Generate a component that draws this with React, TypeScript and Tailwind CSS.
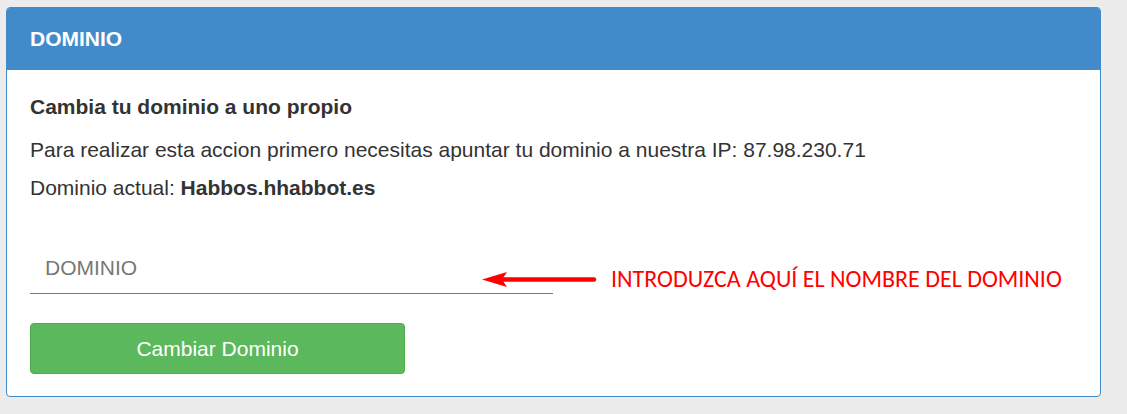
export default function App() {
  return (
    <div className="min-h-[414px] w-full bg-[#ececec] pl-[6px] pr-[26px] pt-[7px] font-['Liberation_Sans',Arial,sans-serif] text-[#333]">
      <section className="overflow-hidden rounded-[4px] border border-[#428bca] bg-white">
        <header className="flex h-[62px] items-center bg-[#428bca] px-[23px]">
          <h1 className="text-[21px] font-bold text-white">DOMINIO</h1>
        </header>
        <div className="px-[23px] pb-[22px] pt-[23px]">
          <h2 className="text-[21px] font-bold leading-[28px]">Cambia tu dominio a uno propio</h2>
          <p className="mt-[15px] text-[21px] leading-[28px]">
            Para realizar esta accion primero necesitas apuntar tu dominio a nuestra IP: 87.98.230.71
          </p>
          <p className="mt-[10px] text-[21px] leading-[28px]">
            Dominio actual: <b>Habbos.hhabbot.es</b>
          </p>
          <div className="relative mt-[41px]">
            <input
              className="h-[51px] w-[523px] border-b border-[#4a7fc0] px-[15px] text-[21px] outline-none placeholder:text-[#777]"
              placeholder="DOMINIO"
            />
            <div className="absolute left-[452px] top-[24px] flex items-center">
              <svg width="115" height="17" viewBox="0 0 115 17">
                <polygon points="0,8.5 25,1 20,8.5 25,16" fill="#ff0000" />
                <line x1="20" y1="8.5" x2="112" y2="8.5" stroke="#ff0000" strokeWidth="4.5" strokeLinecap="round" />
              </svg>
              <span className="ml-[14px] font-['Carlito','Open_Sans',sans-serif] text-[24px] leading-none text-[#ff0000]">
                INTRODUZCA AQUÍ EL NOMBRE DEL DOMINIO
              </span>
            </div>
          </div>
          <button
            className="mt-[29px] h-[51px] w-[375px] rounded-[4px] border border-[#4cae4c] bg-[#5cb85c] text-[21px] text-white"
            type="button"
          >
            Cambiar Dominio
          </button>
        </div>
      </section>
    </div>
  );
}
